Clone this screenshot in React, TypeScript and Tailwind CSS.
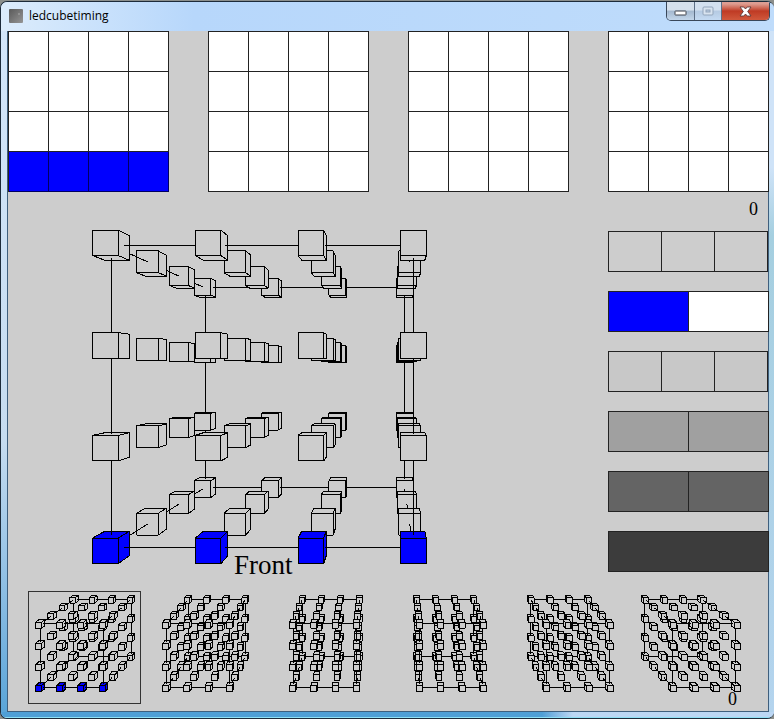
import type { ReactNode } from "react";

const FOCAL = 589;
const CENTER_X = 388;
const CENTER_Y = 371;
const EMPTY = "#cdcdcd";
const LIT = "#0000ff";

type Vec = [number, number, number];
type Item = { depth: number; spread: number; node: ReactNode };

function project([x, y, z]: Vec): [number, number] {
  const s = FOCAL / (FOCAL - z);
  return [CENTER_X + x * s, CENTER_Y + y * s];
}

function points(corners: Vec[]) {
  return corners.map((c) => project(c).map((n) => n.toFixed(2)).join(",")).join(" ");
}

function Box({ at: [x, y, z], half, fill }: { at: Vec; half: number; fill: string }) {
  const faces: Vec[][] = [];
  const [l, r, t, b, n, f] = [x - half, x + half, y - half, y + half, z + half, z - half];
  if (r < 0) faces.push([[r, t, n], [r, t, f], [r, b, f], [r, b, n]]);
  if (l > 0) faces.push([[l, t, n], [l, t, f], [l, b, f], [l, b, n]]);
  if (b < 0) faces.push([[l, b, n], [r, b, n], [r, b, f], [l, b, f]]);
  if (t > 0) faces.push([[l, t, n], [r, t, n], [r, t, f], [l, t, f]]);
  faces.push([[l, t, n], [r, t, n], [r, b, n], [l, b, n]]);
  return (
    <g fill={fill}>
      {faces.map((face, i) => (
        <polygon key={i} points={points(face)} />
      ))}
    </g>
  );
}

/* A 4 x 4 x 4 lattice of boxes, painted from the back layer to the front one. */
function Lattice({ origin, step, half, lit }: { origin: Vec; step: number; half: number; lit: boolean }) {
  const items: Item[] = [];
  const place = (i: number, j: number, k: number): Vec => [
    origin[0] + i * step,
    origin[1] + j * step,
    origin[2] - k * step,
  ];
  const edge = (n: number) => n === 0 || n === 3;
  const addLine = (a: Vec, b: Vec, axis: number, sign: number) => {
    const from = [...a] as Vec;
    const to = [...b] as Vec;
    from[axis] += sign * half;
    to[axis] -= sign * half;
    const [x1, y1] = project(from);
    const [x2, y2] = project(to);
    const mid = a.map((v, n) => (v + b[n]) / 2);
    items.push({
      depth: mid[2],
      spread: Math.hypot(mid[0], mid[1]),
      node: <line x1={x1} y1={y1} x2={x2} y2={y2} />,
    });
  };
  for (let k = 0; k < 4; k++)
    for (let j = 0; j < 4; j++)
      for (let i = 0; i < 4; i++) {
        const p = place(i, j, k);
        items.push({
          depth: p[2],
          spread: Math.hypot(p[0], p[1]),
          node: <Box at={p} half={half} fill={lit && k === 0 && j === 3 ? LIT : EMPTY} />,
        });
        if (i < 3 && edge(j) && edge(k)) addLine(p, place(i + 1, j, k), 0, 1);
        if (j < 3 && edge(i) && edge(k)) addLine(p, place(i, j + 1, k), 1, 1);
        if (k < 3 && edge(i) && edge(j)) addLine(p, place(i, j, k + 1), 2, -1);
      }
  items.sort((a, b) => a.depth - b.depth || b.spread - a.spread);
  return (
    <g stroke="#000" strokeWidth={1} strokeLinejoin="round" shapeRendering="crispEdges">
      {items.map((item, n) => (
        <g key={n}>{item.node}</g>
      ))}
    </g>
  );
}

function LayerGrid({ layer, litRow }: { layer: number; litRow?: number }) {
  return (
    <div className="grid size-[161px] grid-cols-4 grid-rows-4 border-l border-t border-[#222]">
      {Array.from({ length: 16 }, (_, n) => (
        <button
          key={n}
          type="button"
          aria-label={`Layer ${layer + 1}, LED ${n + 1}`}
          className={`border-b border-r ${Math.floor(n / 4) === litRow ? "border-[#000060] bg-[#0000ff]" : "border-[#222] bg-white"}`}
        />
      ))}
    </div>
  );
}

const BARS = [
  { name: "Shift", cols: "w-40 grid-cols-3", fills: ["bg-[#cdcdcd]", "bg-[#cdcdcd]", "bg-[#cdcdcd]"] },
  { name: "Colour", cols: "w-[161px] grid-cols-2", fills: ["bg-[#0000ff]", "bg-white"] },
  { name: "Frame", cols: "w-40 grid-cols-3", fills: ["bg-[#c8c8c8]", "bg-[#c8c8c8]", "bg-[#c8c8c8]"] },
  { name: "Copy", cols: "w-[161px] grid-cols-2", fills: ["bg-[#a0a0a0]", "bg-[#a0a0a0]"] },
  { name: "File", cols: "w-[161px] grid-cols-2", fills: ["bg-[#646464]", "bg-[#646464]"] },
  { name: "Play", cols: "w-[161px] grid-cols-1", fills: ["bg-[#3c3c3c]"] },
];

function ControlBars() {
  return (
    <div className="flex flex-col gap-[19px]">
      {BARS.map((bar) => (
        <div key={bar.name} className={`grid h-[41px] border-l border-t border-[#222] ${bar.cols}`}>
          {bar.fills.map((fill, n) => (
            <button key={n} type="button" aria-label={`${bar.name} ${n + 1}`} className={`border-b border-r border-[#222] ${fill}`} />
          ))}
        </div>
      ))}
    </div>
  );
}

function TitleBar() {
  return (
    <header className="flex h-[29px] items-start justify-between bg-linear-to-r from-[#dcecfc] via-[#b7d7fb] via-25% to-[#bfdcfb]">
      <div className="flex items-center gap-[6px] pl-2 pt-[6px]">
        <svg width="14" height="14" viewBox="0 0 14 14" aria-hidden="true">
          <defs>
            <linearGradient id="appIcon" x1="0" y1="0" x2="1" y2="1">
              <stop offset="0" stopColor="#5a5a5a" />
              <stop offset="0.5" stopColor="#777" />
              <stop offset="1" stopColor="#969696" />
            </linearGradient>
          </defs>
          <rect width="14" height="14" rx="1" fill="url(#appIcon)" />
          <circle cx="10" cy="5" r="1" fill="#9a9a9a" />
        </svg>
        <h1 className="text-[12px] leading-4 text-black">ledcubetiming</h1>
      </div>
      <div className="mr-[4px] flex h-[19px] overflow-hidden rounded-b-[5px] border border-t-0 border-[#39475a]">
        <button type="button" aria-label="Minimize" className="flex w-7 items-center justify-center border-r border-[#5d6f86] bg-linear-to-b from-[#d5e0ec] from-45% via-[#a3b8cf] via-50% to-[#c3d6ea] pt-1">
          <svg width="13" height="6" viewBox="0 0 13 6">
            <rect x="1" y="1" width="11" height="4" rx="0.5" fill="#fff" stroke="#3c414a" />
          </svg>
        </button>
        <button type="button" aria-label="Maximize" className="flex w-[27px] items-center justify-center border-r border-[#5d6f86] bg-linear-to-b from-[#d3e0ef] from-45% via-[#b5cae2] via-50% to-[#c4daf2]">
          <svg width="12" height="10" viewBox="0 0 12 10" fill="none">
            <rect x="1" y="1" width="10" height="8" rx="1" fill="#d8e3ef" stroke="#93a5bb" />
            <rect x="4" y="4" width="4" height="2" fill="#b9cbe0" stroke="#93a5bb" />
          </svg>
        </button>
        <button type="button" aria-label="Close" className="flex w-[47px] items-center justify-center bg-linear-to-b from-[#dd9d92] from-10% via-[#bf3a24] via-50% to-[#d0583c]">
          <svg width="13" height="11" viewBox="0 0 13 11">
            <path d="M1 1H4.800L6.500 3L8.200 1H12L8.700 5.500L12 10H8.200L6.500 8L4.800 10H1L4.300 5.500Z" fill="#fff" stroke="#5b3a3a" strokeWidth="0.9" />
          </svg>
        </button>
      </div>
    </header>
  );
}

export default function App() {
  return (
    <div className="bg-[#8c8f8c] pt-px font-['Open_Sans','Noto_Sans',sans-serif]">
      <div className="overflow-hidden rounded-[7px] border-b border-l border-t border-[#1d2b3a] bg-[#bcd7f4]">
        <TitleBar />
        <div className="flex">
          <div className="w-[6px] bg-linear-to-b from-[#d3e6fa] via-[#c6dcf0] via-60% to-[#5aa5d8]" />
          <main className="relative min-w-0 flex-1 border border-t-0 border-[#3f5f7d] bg-[#cdcdcd] font-['Liberation_Serif',serif] text-black">
            <section aria-label="Layers" className="-mr-px flex justify-between">
              <LayerGrid layer={0} litRow={3} />
              <LayerGrid layer={1} />
              <LayerGrid layer={2} />
              <LayerGrid layer={3} />
            </section>
            <div className="-mr-px flex justify-between">
              <svg width="600" height="380" viewBox="8 192 600 380" className="min-w-0 overflow-visible" role="img" aria-label="LED cube">
                <Lattice origin={[-276.5, -125.5, 0]} step={100.5} half={12.5} lit />
                <text x="234" y="574" fontSize="27">
                  Front
                </text>
              </svg>
              <aside className="shrink-0">
                <output className="block h-[39px] pr-[11px] pt-[7px] text-right text-[18px] leading-5">0</output>
                <ControlBars />
              </aside>
            </div>
            <section aria-label="Frames" className="flex gap-[7px] pb-[7px] pl-5 pt-[19px]">
              {[0, 1, 2, 3, 4, 5].map((n) => (
                <button key={n} type="button" aria-label={`View ${n + 1}`} className={`size-[113px] ${n === 0 ? "outline-1 -outline-offset-1 outline-[#333]" : ""}`}>
                  <svg width="113" height="113" viewBox={`${28 + n * 120} 591 113 113`} className="block overflow-visible">
                    <Lattice origin={[-330 + n * 120, 240, 30]} step={20} half={2.8} lit={n === 0} />
                  </svg>
                </button>
              ))}
            </section>
            <output className="absolute bottom-0 right-[31px] text-[18px] leading-6">0</output>
          </main>
          <div className="w-[5px] bg-linear-to-b from-[#cfe3f8] from-20% via-[#a5cfe0] via-30% to-[#b4d4ee]" />
        </div>
        <div className="h-[6px] border-b border-[#8fe0f5] bg-linear-to-r from-[#4f9fd6] from-70% to-[#bcd7f4] to-74%" />
      </div>
    </div>
  );
}
